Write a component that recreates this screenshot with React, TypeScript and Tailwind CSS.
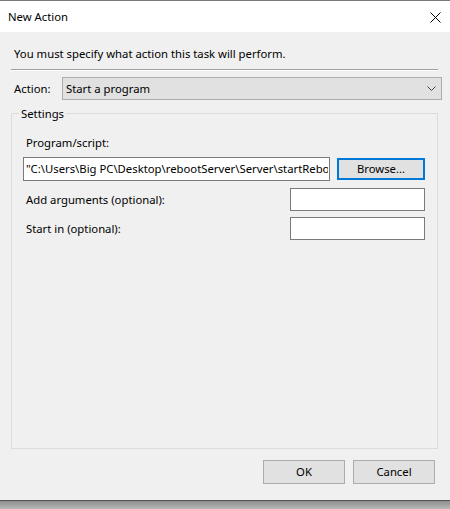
import React from "react";

const font = { fontFamily: '"Noto Sans", "Open Sans", sans-serif' };

export default function App() {
  return (
    <div className="w-[450px] h-[509px] flex flex-col bg-[#a8a8a8] text-[11.3px] text-black" style={font}>
      <div className="flex flex-col flex-1 border-t border-[#7a7a7a] bg-[#f0f0f0]">
        <div className="h-[31px] bg-white flex items-center justify-between pl-[8px] pr-[9px]">
          <span className="leading-[16px] mt-[1px]">New Action</span>
          <svg width="11" height="11" viewBox="0 0 11 11" className="mt-[1px]">
            <path d="M0.5 0.5 L10.5 10.5 M10.5 0.5 L0.5 10.5" stroke="#000" strokeWidth="1" />
          </svg>
        </div>
        <div className="flex flex-col flex-1 pt-[13px] pl-[11px] pr-[12px]">
          <div className="pl-[3px] leading-[16px] pt-[1px]">You must specify what action this task will perform.</div>
          <div className="mt-[7px] h-[1px] bg-[#a0a0a0] border-b border-white box-content"></div>
          <div className="mt-[6px] flex items-center">
            <span className="pl-[3px] w-[51px] leading-[16px]">Action:</span>
            <div className="flex-1 mr-[-4px] h-[23px] bg-[#e1e1e1] border border-[#adadad] flex items-center justify-between pl-[3px] pr-[5px]">
              <span className="leading-[16px]">Start a program</span>
              <svg width="9" height="5" viewBox="0 0 9 5">
                <path d="M0.5 0.5 L4.5 4.5 L8.5 0.5" stroke="#444" strokeWidth="1" fill="none" />
              </svg>
            </div>
          </div>
          <div className="mt-[13px] relative border border-[#dcdcdc] h-[336px] pt-[21px] pl-[11px] pr-[11px]">
            <span className="absolute left-[7px] -top-[8px] px-[2px] bg-[#f0f0f0] leading-[16px]">Settings</span>
            <div className="pl-[3px] leading-[16px]">Program/script:</div>
            <div className="mt-[6px] flex items-center">
              <div className="w-[307px] h-[24px] bg-white border border-[#7a7a7a] flex items-center pl-[2px] pr-[1px]">
                <div className="w-full overflow-hidden whitespace-nowrap text-clip leading-[16px]">"C:\Users\Big PC\Desktop\rebootServer\Server\startReboot.bat"</div>
              </div>
              <div className="ml-[7px] w-[88px] h-[22px] bg-[#e1e1e1] border-2 border-[#0078d7] flex items-center justify-center">
                <span className="leading-[16px]">Browse...</span>
              </div>
            </div>
            <div className="mt-[7px] flex items-center justify-between">
              <span className="pl-[3px] leading-[16px]">Add arguments (optional):</span>
              <div className="w-[135px] h-[23px] bg-white border border-[#7a7a7a] mr-[1px]"></div>
            </div>
            <div className="mt-[6px] flex items-center justify-between">
              <span className="pl-[3px] leading-[16px]">Start in (optional):</span>
              <div className="w-[135px] h-[23px] bg-white border border-[#7a7a7a] mr-[1px]"></div>
            </div>
          </div>
          <div className="mt-[11px] flex justify-end gap-[8px] mr-[3px]">
            <div className="w-[82px] h-[24px] bg-[#e1e1e1] border border-[#adadad] flex items-center justify-center">
              <span className="leading-[16px]">OK</span>
            </div>
            <div className="w-[82px] h-[24px] bg-[#e1e1e1] border border-[#adadad] flex items-center justify-center">
              <span className="leading-[16px]">Cancel</span>
            </div>
          </div>
        </div>
      </div>
      <div className="h-[1px] bg-[#555]"></div>
      <div className="h-[8px] bg-gradient-to-b from-[#8f8f8f] to-[#b8b8b8]"></div>
    </div>
  );
}
